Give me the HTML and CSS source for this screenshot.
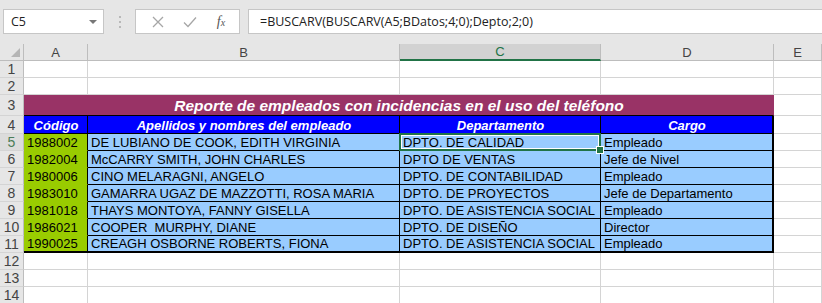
FILE: index.html
```html
<!DOCTYPE html>
<html lang="es">
<head>
  <meta charset="UTF-8"/>
  <title>Reporte de empleados</title>
  <link rel="stylesheet" href="styles.css">
</head>
<body>
  <div class="formula-bar">
    <div class="name-box">
      <span>C5</span>
      <svg class="caret" width="8" height="5" viewBox="0 0 8 5"><path d="M0 0h8L4 4z" fill="#777"/></svg>
    </div>
    <div class="grip">
      <svg width="3" height="13" viewBox="0 0 3 13"><rect x="1" y="1" width="2" height="2" fill="#b8b8b8"/><rect x="1" y="6" width="2" height="2" fill="#b8b8b8"/><rect x="1" y="11" width="2" height="2" fill="#b8b8b8"/></svg>
    </div>
    <div class="fx-buttons">
      <svg width="12" height="12" viewBox="0 0 12 12"><path d="M1 1l10 10M11 1L1 11" stroke="#a6a6a6" stroke-width="1.3"/></svg>
      <svg width="14" height="12" viewBox="0 0 14 12"><path d="M1 6.5l4 4L13 1.5" stroke="#a6a6a6" stroke-width="1.3" fill="none"/></svg>
      <span class="fx">f<small>x</small></span>
    </div>
    <div class="formula-input">=BUSCARV(BUSCARV(A5;BDatos;4;0);Depto;2;0)</div>
  </div>

  <div class="sheet">
    <!-- column headers -->
    <div class="corner"><svg width="9" height="9" viewBox="0 0 9 9"><path d="M9 0v9H0z" fill="#b5b5b5"/></svg></div>
    <div class="col-head">A</div>
    <div class="col-head">B</div>
    <div class="col-head selected">C</div>
    <div class="col-head">D</div>
    <div class="col-head">E</div>

    <!-- rows 1-2 -->
    <div class="row-head">1</div><div class="cell"></div><div class="cell"></div><div class="cell"></div><div class="cell"></div><div class="cell"></div>
    <div class="row-head">2</div><div class="cell"></div><div class="cell"></div><div class="cell"></div><div class="cell"></div><div class="cell"></div>

    <!-- row 3: title -->
    <div class="row-head">3</div>
    <div class="cell title">Reporte de empleados con incidencias en el uso del teléfono</div>
    <div class="cell"></div>

    <!-- row 4: table headers -->
    <div class="row-head">4</div>
    <div class="cell th">Código</div>
    <div class="cell th">Apellidos y nombres del empleado</div>
    <div class="cell th">Departamento</div>
    <div class="cell th last">Cargo</div>
    <div class="cell"></div>

    <div class="row-head active">5</div>
    <div class="cell code">1988002</div>
    <div class="cell td">DE LUBIANO DE COOK, EDITH VIRGINIA</div>
    <div class="cell td current">DPTO. DE CALIDAD</div>
    <div class="cell td last">Empleado</div>
    <div class="cell"></div>

    <div class="row-head">6</div>
    <div class="cell code">1982004</div>
    <div class="cell td">McCARRY SMITH, JOHN CHARLES</div>
    <div class="cell td">DPTO DE VENTAS</div>
    <div class="cell td last">Jefe de Nivel</div>
    <div class="cell"></div>

    <div class="row-head">7</div>
    <div class="cell code">1980006</div>
    <div class="cell td">CINO MELARAGNI, ANGELO</div>
    <div class="cell td">DPTO. DE CONTABILIDAD</div>
    <div class="cell td last">Empleado</div>
    <div class="cell"></div>

    <div class="row-head">8</div>
    <div class="cell code">1983010</div>
    <div class="cell td">GAMARRA UGAZ DE MAZZOTTI, ROSA MARIA</div>
    <div class="cell td">DPTO. DE PROYECTOS</div>
    <div class="cell td last">Jefe de Departamento</div>
    <div class="cell"></div>

    <div class="row-head">9</div>
    <div class="cell code">1981018</div>
    <div class="cell td">THAYS MONTOYA, FANNY GISELLA</div>
    <div class="cell td">DPTO. DE ASISTENCIA SOCIAL</div>
    <div class="cell td last">Empleado</div>
    <div class="cell"></div>

    <div class="row-head">10</div>
    <div class="cell code">1986021</div>
    <div class="cell td">COOPER&nbsp; MURPHY, DIANE</div>
    <div class="cell td">DPTO. DE DISEÑO</div>
    <div class="cell td last">Director</div>
    <div class="cell"></div>

    <div class="row-head">11</div>
    <div class="cell code bottom">1990025</div>
    <div class="cell td bottom">CREAGH OSBORNE ROBERTS, FIONA</div>
    <div class="cell td bottom">DPTO. DE ASISTENCIA SOCIAL</div>
    <div class="cell td last bottom">Empleado</div>
    <div class="cell"></div>

    <div class="row-head">12</div><div class="cell"></div><div class="cell"></div><div class="cell"></div><div class="cell"></div><div class="cell"></div>
    <div class="row-head">13</div><div class="cell"></div><div class="cell"></div><div class="cell"></div><div class="cell"></div><div class="cell"></div>
    <div class="row-head">14</div><div class="cell"></div><div class="cell"></div><div class="cell"></div><div class="cell"></div><div class="cell"></div>
  </div>
</body>
</html>
```

FILE: styles.css
```css
* { box-sizing: border-box; }
body { margin: 0; background: #e6e6e6; font-family: 'Liberation Sans', Arial, sans-serif; overflow: hidden; }

/* formula bar */
.formula-bar { display: flex; align-items: stretch; height: 44px; padding: 9px 0 10px 3px; }
.name-box { width: 101px; background: #fff; border: 1px solid #c6c6c6; display: flex; align-items: center; justify-content: space-between; padding: 0 6px 0 7px; font-family: 'Open Sans', sans-serif; font-size: 12.5px; color: #222; }
.caret { margin-top: 1px; }
.grip { width: 31px; display: flex; align-items: center; justify-content: center; }
.fx-buttons { width: 105px; background: #fff; border: 1px solid #c6c6c6; display: flex; align-items: center; justify-content: space-around; padding: 0 4px 0 6px; }
.fx { font-family: 'Liberation Serif', serif; font-style: italic; font-size: 14px; color: #555; }
.fx small { font-size: 10px; }
.formula-input { flex: 1; margin-left: 8px; background: #fff; border: 1px solid #c6c6c6; border-right: none; display: flex; align-items: center; padding-left: 11px; font-family: 'Open Sans', sans-serif; font-size: 12.5px; color: #222; }

/* grid */
.sheet { display: grid; grid-template-columns: 24px 64px 312px 201px 173px 1fr; grid-template-rows: 17px 17px 17px 21px 18px repeat(10, 17px); background: #fff; }
.corner, .col-head, .row-head { background: #e6e6e6; color: #444; font-size: 13px; display: flex; align-items: center; justify-content: center; }
.corner { border-right: 1px solid #bdbdbd; border-bottom: 1px solid #bdbdbd; align-items: flex-end; justify-content: flex-end; padding: 0 3px 3px 0; }
.col-head { border-right: 1px solid #bdbdbd; border-bottom: 1px solid #bdbdbd; }
.col-head.selected { background: #d2d2d2; color: #217346; border-bottom: 2px solid #217346; }
.row-head { border-right: 1px solid #bdbdbd; border-bottom: 1px solid #d4d4d4; font-size: 14px; }
.row-head.active { background: #dcdcdc; color: #4b7d58; }

.cell { border-right: 1px solid #d4d4d4; border-bottom: 1px solid #d4d4d4; font-size: 13px; white-space: nowrap; overflow: visible; display: flex; align-items: flex-end; padding: 0 2px 0 3px; line-height: 15px; }

.title { grid-column: 2 / 6; background: #993366; border-right-color: #993366; border-bottom: 1px solid #000; color: #fff; font-weight: bold; font-style: italic; font-size: 15.5px; justify-content: center; align-items: center; padding-top: 1px; }
.th { background: #0000ff; color: #fff; font-weight: bold; font-style: italic; justify-content: center; border-right: 1px solid #000; border-bottom: 1px solid #000; }
.code { background: #99cc00; color: #000; border-right: 1px solid #000; border-bottom-color: #99cc00; }
.td { background: #99ccff; color: #000; border-right: 1px solid #000; border-bottom: 1px solid #000; }
.last { border-right: 2px solid #000; }
.bottom { border-bottom: 2px solid #000; }
.code.bottom { border-bottom-color: #000; }

/* active cell selection */
.current { position: relative; }
.current::before { content: ""; position: absolute; left: -1px; top: -1px; right: -1px; bottom: -1px; border: 2px solid #217346; box-shadow: inset 0 0 0 1px #fff; }
.current::after { content: ""; position: absolute; right: -4px; bottom: -4px; width: 6px; height: 6px; background: #217346; border: 1px solid #fff; }
```
